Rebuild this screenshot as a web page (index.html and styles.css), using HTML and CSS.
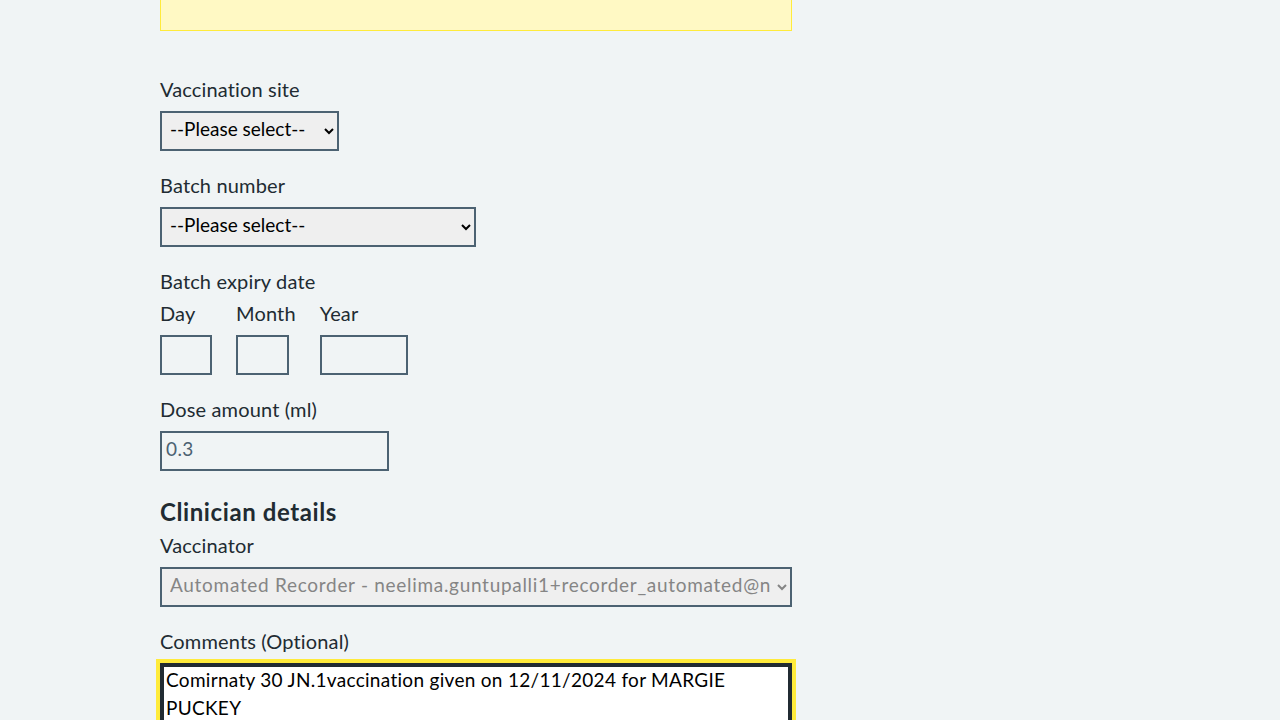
FILE: index.html
```html
<!DOCTYPE html>
<html lang="en">
<head>
<meta charset="utf-8">
<title>Record vaccination</title>
<link rel="stylesheet" href="styles.css">
</head>
<body>
<main class="page">
  <div class="warning-box"></div>

  <div class="form-group">
    <label class="label" for="site">Vaccination site</label>
    <select class="select select-site" id="site">
      <option>--Please select--</option>
    </select>
  </div>

  <div class="form-group">
    <label class="label" for="batch">Batch number</label>
    <select class="select select-batch" id="batch">
      <option>--Please select--</option>
    </select>
  </div>

  <fieldset class="form-group fieldset">
    <legend class="label legend">Batch expiry date</legend>
    <div class="date-input">
      <div class="date-item">
        <label class="label" for="day">Day</label>
        <input class="input input-day" id="day" type="text">
      </div>
      <div class="date-item">
        <label class="label" for="month">Month</label>
        <input class="input input-month" id="month" type="text">
      </div>
      <div class="date-item">
        <label class="label" for="year">Year</label>
        <input class="input input-year" id="year" type="text">
      </div>
    </div>
  </fieldset>

  <div class="form-group">
    <label class="label" for="dose">Dose amount (ml)</label>
    <input class="input input-dose" id="dose" type="text" value="0.3" readonly>
  </div>

  <h2 class="heading">Clinician details</h2>
  <div class="form-group">
    <label class="label" for="vaccinator">Vaccinator</label>
    <select class="select select-vaccinator" id="vaccinator" disabled>
      <option>Automated Recorder - neelima.guntupalli1+recorder_automated@nhs.net</option>
    </select>
  </div>

  <div class="form-group">
    <label class="label" for="comments">Comments (Optional)</label>
    <textarea class="textarea" id="comments" rows="5">Comirnaty 30 JN.1vaccination given on 12/11/2024 for MARGIE PUCKEY</textarea>
  </div>
</main>
</body>
</html>
```

FILE: styles.css
```css
html, body {
  margin: 0;
  padding: 0;
  background: #f0f4f5;
}

body {
  font-family: Lato, "Liberation Sans", sans-serif;
  color: #212b32;
  overflow: hidden;
}

.page {
  width: 632px;
  padding-left: 160px;
}

.warning-box {
  height: 30px;
  background: #fff9c4;
  border: 1px solid #ffeb3b;
  border-top: none;
  margin-bottom: 48px;
}

.form-group {
  margin: 0 0 24px 0;
}

.fieldset {
  border: 0;
  padding: 0;
  min-width: 0;
}

.label {
  display: block;
  font-size: 20px;
  line-height: 21px;
  letter-spacing: 0.15px;
  margin: 0 0 11px 0;
}

.legend {
  padding: 0;
}

.select {
  display: block;
  box-sizing: border-box;
  height: 40px;
  border: 2px solid #4c6272;
  border-radius: 0;
  background-color: #efefef;
  color: #000;
  font-family: inherit;
  font-size: 19px;
  padding: 0 4px 6px 4px;
  margin: 0;
}

.select-site { width: 179px; }
.select-batch { width: 316px; }
.select-vaccinator {
  width: 632px;
  color: #858585;
  letter-spacing: 0.7px;
  opacity: 1;
}

.date-input {
  display: flex;
  gap: 24px;
}

.date-item {
  display: flex;
  flex-direction: column;
  align-items: flex-start;
}

.input {
  display: block;
  box-sizing: border-box;
  height: 40px;
  border: 2px solid #4c6272;
  border-radius: 0;
  background: transparent;
  font-family: inherit;
  font-size: 19px;
  padding: 0 4px 6px 4px;
  margin: 0;
  color: #212b32;
}

.input-day { width: 52px; }
.input-month { width: 53px; }
.input-year { width: 88px; }
.input-dose {
  width: 229px;
  color: #4c6272;
  letter-spacing: 0.4px;
  outline: none;
}

.heading {
  font-size: 24px;
  line-height: 32px;
  font-weight: 700;
  letter-spacing: 0.6px;
  padding-top: 1px;
  margin: 0 0 7px 0;
}

.textarea {
  display: block;
  box-sizing: border-box;
  width: 632px;
  border: 2px solid #212b32;
  box-shadow: inset 0 0 0 2px #212b32;
  outline: 4px solid #ffeb3b;
  border-radius: 0;
  background: #fff;
  color: #000;
  font-family: inherit;
  font-size: 19px;
  line-height: 28px;
  letter-spacing: 0.3px;
  padding: 1px 4px;
  margin: 0;
  resize: none;
}
```
